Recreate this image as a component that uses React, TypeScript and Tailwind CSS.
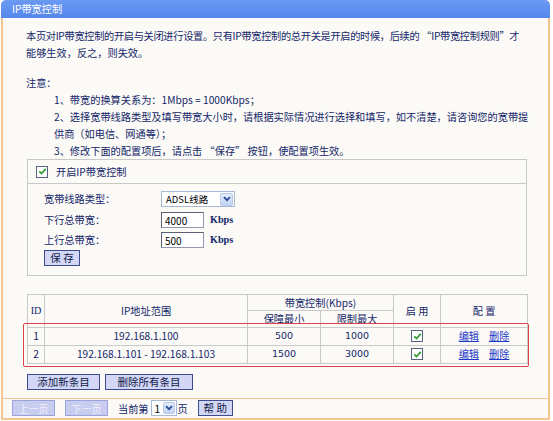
import React from 'react';

const FONT = { fontFamily: '"Noto Sans CJK SC", "Liberation Sans", sans-serif' };

function Check() {
  return (
    <span className="inline-flex h-[12px] w-[12px] items-center justify-center border border-[#56657f] bg-white">
      <svg width="9" height="9" viewBox="0 0 9 9">
        <path d="M1.3 4.4 L3.5 6.6 L7.7 1.9" stroke="#2e9b33" strokeWidth="1.7" fill="none" />
      </svg>
    </span>
  );
}

function Arrow({ size = 14 }: { size?: number }) {
  return (
    <span
      className="inline-flex items-center justify-center rounded-[2px] border border-[#b7c8ea] bg-gradient-to-b from-[#e3ecfc] to-[#c2d3f4]"
      style={{ width: size, height: size }}
    >
      <svg width="8" height="6" viewBox="0 0 8 6">
        <path d="M1 1.2 L4 4.2 L7 1.2" stroke="#2b4a9a" strokeWidth="1.8" fill="none" />
      </svg>
    </span>
  );
}

function Btn({ children, w, disabled }: { children: React.ReactNode; w: number; disabled?: boolean }) {
  return (
    <span
      className={
        disabled
          ? 'inline-flex h-[16px] items-center justify-center border border-[#9aa4d8] bg-[#c8ccee] text-[10px] text-[#eef0fb]'
          : 'inline-flex h-[16px] items-center justify-center border border-[#3c4c90] bg-[#d3d6f4] text-[10.5px] text-[#101c4c]'
      }
      style={{ width: w }}
    >
      {children}
    </span>
  );
}

export default function App() {
  const cell = 'border border-[#c9c9c9] text-center align-middle p-0';
  return (
    <div className="h-[421px] w-[553px] bg-white text-[10.2px] text-[#14266a]" style={FONT}>
      <div className="ml-[1px] flex h-[420px] w-[549px] flex-col">
        <div className="flex h-[18px] items-center rounded-t-[5px] bg-gradient-to-b from-[#6b9af3] to-[#5486ec] pl-[11px] text-[10.2px] text-white">
          IP带宽控制
        </div>
        <div className="relative flex flex-1 flex-col border-x-2 border-b-2 border-[#f6c48f] bg-[#fbfaf6]">
          <div className="pl-[23px] pt-[9px] leading-[17px] whitespace-nowrap">
            <span className="tracking-[-0.3px]">本页对IP带宽控制的开启与关闭进行设置。只有IP带宽控制的总开关是开启的时候，后续的 “IP带宽控制规则”才</span>
            <br />
            能够生效，反之，则失效。
          </div>
          <div className="mt-[13px] pl-[23px] leading-[17px]">注意：</div>
          <div className="pl-[51px] leading-[17px] whitespace-nowrap">
            <div>1、带宽的换算关系为：1Mbps = 1000Kbps；</div>
            <div>2、选择宽带线路类型及填写带宽大小时，请根据实际情况进行选择和填写，如不清楚，请咨询您的宽带提</div>
            <div>供商（如电信、网通等）；</div>
            <div>3、修改下面的配置项后，请点击 “保存” 按钮，使配置项生效。</div>
          </div>

          <div className="ml-[24px] w-[500px] border border-[#c8c8c8]">
            <div className="flex h-[24px] items-center border-b border-[#c8c8c8] pl-[8px]">
              <Check />
              <span className="ml-[8px]">开启IP带宽控制</span>
            </div>
            <div className="pb-[9px] pl-[16px] pt-[7px]">
              <div className="flex h-[16px] items-center">
                <span className="w-[117px]">宽带线路类型：</span>
                <span className="flex h-[16px] w-[74px] items-center justify-between border border-[#a9b8d6] bg-white pl-[4px] pr-[1px] text-[9.5px] text-black">
                  ADSL线路
                  <Arrow size={13} />
                </span>
              </div>
              <div className="mt-[5px] flex h-[16px] items-center">
                <span className="w-[117px]">下行总带宽：</span>
                <span className="flex h-[16px] w-[43px] items-center border border-[#8f98ad] border-l-[#5b6273] border-t-[#5b6273] bg-white pl-[3px] text-[10px] text-black">
                  4000
                </span>
                <span className="ml-[6px] font-semibold" style={{ fontFamily: '"Liberation Serif", serif' }}>Kbps</span>
              </div>
              <div className="mt-[4px] flex h-[16px] items-center">
                <span className="w-[117px]">上行总带宽：</span>
                <span className="flex h-[16px] w-[43px] items-center border border-[#8f98ad] border-l-[#5b6273] border-t-[#5b6273] bg-white pl-[3px] text-[10px] text-black">
                  500
                </span>
                <span className="ml-[6px] font-semibold" style={{ fontFamily: '"Liberation Serif", serif' }}>Kbps</span>
              </div>
              <div className="mt-[2px] flex">
                <Btn w={36}>保&nbsp;存</Btn>
              </div>
            </div>
          </div>

          <div className="relative ml-[24px] mt-[18px] w-[500px]">
            <table className="w-[500px] border-collapse border border-[#b9b9b9]" style={{ tableLayout: 'fixed' }}>
              <colgroup>
                <col style={{ width: 17 }} />
                <col style={{ width: 203 }} />
                <col style={{ width: 73 }} />
                <col style={{ width: 73 }} />
                <col style={{ width: 47 }} />
                <col style={{ width: 87 }} />
              </colgroup>
              <thead>
                <tr className="h-[16px]">
                  <td rowSpan={2} className={cell} style={{ fontFamily: '"Liberation Serif", serif' }}>ID</td>
                  <td rowSpan={2} className={cell}>IP地址范围</td>
                  <td colSpan={2} className={cell}>带宽控制(Kbps)</td>
                  <td rowSpan={2} className={cell}>启&nbsp;用</td>
                  <td rowSpan={2} className={cell}>配&nbsp;置</td>
                </tr>
                <tr className="h-[16px]">
                  <td className={cell}>保障最小</td>
                  <td className={cell}>限制最大</td>
                </tr>
              </thead>
              <tbody>
                {[
                  ['1', '192.168.1.100', '500', '1000'],
                  ['2', '192.168.1.101 - 192.168.1.103', '1500', '3000'],
                ].map((r) => (
                  <tr key={r[0]} className="h-[18px]">
                    <td className={cell}>{r[0]}</td>
                    <td className={cell}>{r[1]}</td>
                    <td className={cell} style={{ fontFamily: '"DejaVu Sans", sans-serif', fontSize: 9.5 }}>{r[2]}</td>
                    <td className={cell} style={{ fontFamily: '"DejaVu Sans", sans-serif', fontSize: 9.5 }}>{r[3]}</td>
                    <td className={cell}>
                      <span className="inline-flex pt-[2px]"><Check /></span>
                    </td>
                    <td className={cell}>
                      <span className="text-[#1d39c9] underline">编辑</span>
                      <span className="ml-[10px] text-[#1d39c9] underline">删除</span>
                    </td>
                  </tr>
                ))}
              </tbody>
            </table>
            <div className="pointer-events-none absolute left-[-4px] top-[29px] h-[44px] w-[506px] rounded-[2px] border-[1.5px] border-[#e0404a]" />
          </div>

          <div className="ml-[24px] mt-[10px] flex gap-[5px]">
            <Btn w={73}>添加新条目</Btn>
            <Btn w={88}>删除所有条目</Btn>
          </div>

          <div className="mt-[8px] h-[1px] bg-[#f6c48f]" />

          <div className="flex flex-1 items-center pl-[9px]">
            <Btn w={43} disabled>上一页</Btn>
            <span className="ml-[10px]"><Btn w={43} disabled>下一页</Btn></span>
            <span className="ml-[10px]">当前第</span>
            <span className="ml-[2px] flex h-[16px] w-[26px] items-center justify-between border border-[#a9b8d6] bg-white pl-[3px] pr-[1px] text-[10px] text-black">
              1
              <Arrow size={12} />
            </span>
            <span className="ml-[1px]">页</span>
            <span className="ml-[10px]"><Btn w={35}>帮&nbsp;助</Btn></span>
          </div>
        </div>
      </div>
    </div>
  );
}
